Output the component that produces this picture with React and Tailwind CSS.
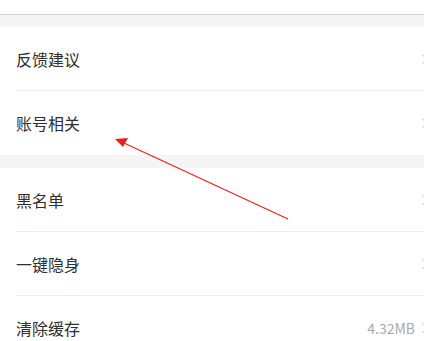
function Chevron() {
  return (
    <svg width="8" height="12" viewBox="0 0 8 12" className="-mr-[5px] shrink-0">
      <path d="M1.5 1.5 L6 6 L1.5 10.5" fill="none" stroke="#d4d4d4" strokeWidth="1.2" />
    </svg>
  );
}

function Row({ label, value, last }) {
  return (
    <div className="pl-4">
      <div
        className={
          "flex h-[64px] items-center justify-between " +
          (last ? "" : "border-b border-[#ededed]")
        }
      >
        <span className="text-[16px] text-[#2e2e2e]">{label}</span>
        <div className="flex items-center gap-[6px]">
          {value && <span className="text-[14px] text-[#aaa]">{value}</span>}
          <Chevron />
        </div>
      </div>
    </div>
  );
}

export default function App() {
  return (
    <div
      className="relative h-[341px] w-[424px] overflow-hidden bg-white"
      style={{ fontFamily: '"Noto Sans CJK SC", "Noto Sans", sans-serif' }}
    >
      {/* TOP */}
      <div className="h-[14px] bg-white" />
      <div className="h-px bg-[#cfcfcf]" />
      <div className="h-[12px] bg-[#f5f5f5]" />

      {/* SECTION 1 */}
      <div className="bg-white">
        <Row label="反馈建议" />
        <Row label="账号相关" last />
      </div>

      <div className="h-[13px] bg-[#f5f5f5]" />

      {/* SECTION 2 */}
      <div className="bg-white">
        <Row label="黑名单" />
        <Row label="一键隐身" />
        <Row label="清除缓存" value="4.32MB" last />
      </div>

      {/* ANNOTATION ARROW */}
      <svg className="absolute left-0 top-0" width="424" height="341">
        <line x1="288" y1="219" x2="124" y2="143" stroke="#e8201a" strokeWidth="1.2" />
        <polygon points="115,139 128,138 123,147" fill="#e8201a" />
      </svg>
    </div>
  );
}
